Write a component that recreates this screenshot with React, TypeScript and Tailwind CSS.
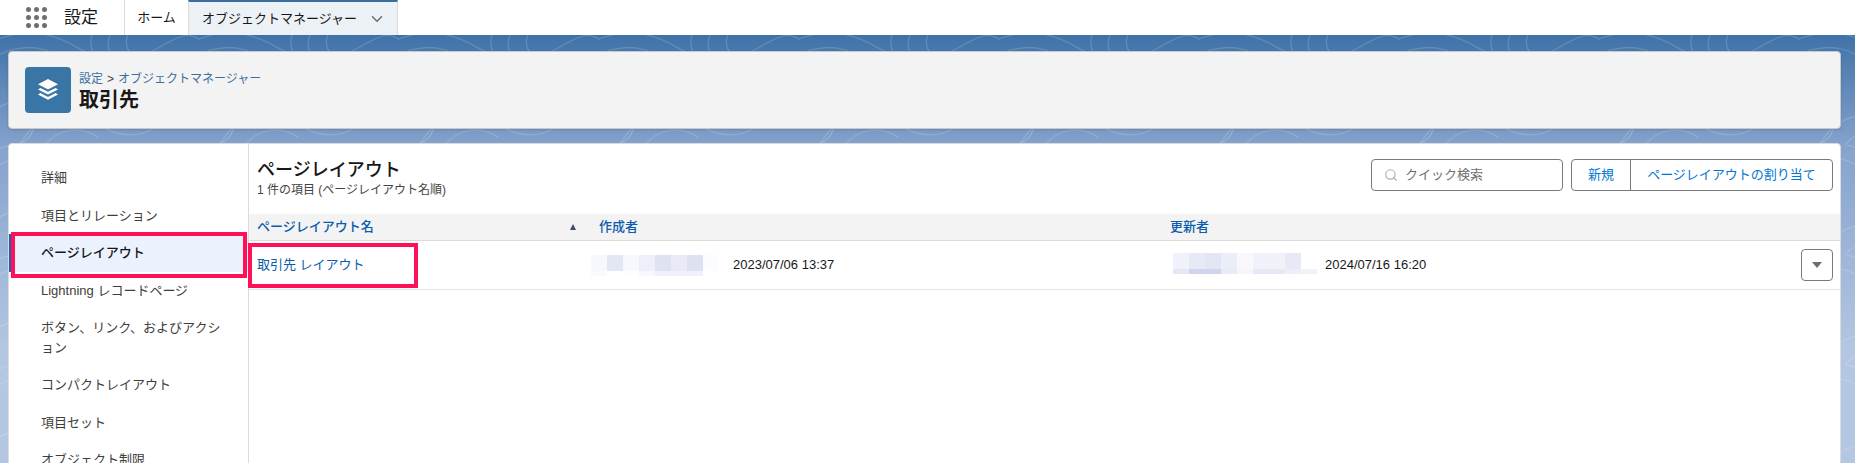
import React from "react";
import { ChevronDown, Search } from "lucide-react";

const sideItems = [
  "詳細",
  "項目とリレーション",
  "ページレイアウト",
  "Lightning レコードページ",
  "ボタン、リンク、およびアクション",
  "コンパクトレイアウト",
  "項目セット",
  "オブジェクト制限",
];

const creatorTop = ["#f7f8fd", "#e3e6f5", "#f7f8fc", "#eef0f9", "#dfe2f2", "#e8ebf7", "#dde1f2", "#fcfcfe"];
const creatorBottom = ["#f9f9fe", "#ffffff", "#fdfdff", "#f7f8fd", "#eef0fa", "#eef0fa", "#f0f2fb", "#ffffff"];
const updaterTop = ["#f0f1fa", "#e8e9f6", "#e3e5f4", "#ebedf8", "#f9f9fd", "#f0f1f9", "#f0f1f9", "#e8e9f6", "#ffffff"];
const updaterBottom = ["#e5e7f5", "#cfd5ef", "#cfd5ef", "#e8eaf6", "#f5f5fb", "#e6e8f5", "#e6e8f5", "#eceef8", "#f0f1f9"];

// pixelated patch that hides a user name
function Blur({ top, bottom, topH, bottomH }: { top: string[]; bottom: string[]; topH: string; bottomH: string }) {
  return (
    <div className="flex flex-col">
      <div className={`flex ${topH}`}>
        {top.map((c, i) => (
          <div key={i} className="w-[16px]" style={{ backgroundColor: c }} />
        ))}
      </div>
      <div className={`flex ${bottomH}`}>
        {bottom.map((c, i) => (
          <div key={i} className="w-[16px]" style={{ backgroundColor: c }} />
        ))}
      </div>
    </div>
  );
}

function TopoLines() {
  return (
    <svg className="absolute inset-0 w-full h-full" fill="none" stroke="#ffffff" strokeOpacity="0.16" strokeWidth="1.2">
      <defs>
        <pattern id="topo" width="200" height="110" patternUnits="userSpaceOnUse">
          <path d="M-10 8C30 -12 60 2 80 14S130 30 160 12 190 0 210 10" />
          <path d="M-10 24C30 2 55 16 75 32S130 50 165 30 190 16 210 26" />
          <path d="M20 110C35 80 70 72 95 88S150 106 165 80" />
          <path d="M45 110C58 94 80 90 98 102" />
          <path d="M0 72C15 62 30 68 33 86S20 110 10 110" />
          <path d="M110 0C105 12 110 20 120 28M128 0C124 10 128 16 134 22M92 0C88 12 94 22 104 30" />
          <path d="M175 44C190 50 196 66 188 80M160 50C176 56 182 68 176 84" />
        </pattern>
      </defs>
      <rect width="100%" height="100%" fill="url(#topo)" stroke="none" />
    </svg>
  );
}

export default function App() {
  return (
    <div
      className="w-[1855px] h-[463px] overflow-hidden flex flex-col text-[13px] text-[#181818]"
      style={{ fontFamily: '"Liberation Sans", "Noto Sans CJK JP", sans-serif' }}
    >
      {/* top nav */}
      <div className="h-[35px] shrink-0 bg-white flex items-center">
        <div className="ml-[26px] w-[21px] grid grid-cols-3 gap-x-[3px] gap-y-[3px]">
          {Array.from({ length: 9 }).map((_, i) => (
            <div key={i} className="w-[5px] h-[5px] rounded-full bg-[#706e6b]" />
          ))}
        </div>
        <div className="ml-[17px] w-[60px] text-[17px] leading-none">設定</div>
        <div className="h-full w-[64px] border-l border-[#dddbda] flex items-center justify-center">ホーム</div>
        <div className="h-full w-[210px] bg-[#ecf1f6] border-t-[2px] border-t-[#3a6f9f] border-x border-x-[#dddbda] flex items-center pl-[13px]">
          <span>オブジェクトマネージャー</span>
          <ChevronDown className="w-[18px] h-[18px] ml-[11px] text-[#706e6b]" />
        </div>
      </div>

      {/* page body */}
      <div className="relative flex-1 bg-gradient-to-b from-[#3f72a8] via-[#85a3cd] via-25% to-[#b3c6e2] to-70% pt-[16px] pl-[8px] pr-[14px]">
        <TopoLines />

        <div className="relative h-[78px] bg-[#f3f3f3] rounded-[4px] border border-[#c9c9c9] shadow-sm flex items-center pl-[16px]">
          <div className="w-[46px] h-[46px] rounded-[4px] bg-[#3a76a5] flex items-center justify-center">
            <svg width="22" height="24" viewBox="0 0 22 24" fill="#ffffff">
              <path d="M11 1l10 5.2L11 11.4 1 6.2z" />
              <path d="M3.4 9.9L11 13.8l7.6-3.9L21 11.4l-10 5.2-10-5.2z" />
              <path d="M3.4 15.1L11 19l7.6-3.9L21 16.6l-10 5.2-10-5.2z" />
            </svg>
          </div>
          <div className="ml-[8px] pt-[3px] flex flex-col">
            <div className="text-[12px] leading-[16px] text-[#3a6f9f]">
              設定<span className="text-[#444444] mx-[4px]">&gt;</span>オブジェクトマネージャー
            </div>
            <div className="text-[20px] leading-[26px] font-bold">取引先</div>
          </div>
        </div>

        <div className="relative mt-[14px] h-[340px] bg-white rounded-t-[4px] border border-[#dddbda] flex">
          {/* sidebar */}
          <div className="w-[240px] shrink-0 border-r border-[#dddbda] pt-[15px]">
            {sideItems.map((item, i) => (
              <div
                key={item}
                className={
                  i === 2
                    ? "pl-[30px] pr-[20px] py-[9px] leading-[19.5px] bg-[#ebf2fd] border-l-[2px] border-[#1b5fb0] font-medium"
                    : "pl-[32px] pr-[20px] py-[9px] leading-[19.5px] text-[#3e3e3c]"
                }
              >
                {item}
              </div>
            ))}
          </div>

          {/* list */}
          <div className="flex-1 flex flex-col">
            <div className="h-[70px] shrink-0 flex items-start justify-between pl-[8px] pr-[7px]">
              <div className="pt-[14px]">
                <div className="text-[18px] leading-[24px] font-medium">ページレイアウト</div>
                <div className="text-[12px] leading-[16px] text-[#444444]">1 件の項目 (ページレイアウト名順)</div>
              </div>
              <div className="flex items-center gap-[8px] mt-[15px]">
                <div className="w-[192px] h-[32px] border border-[#7a7a7a] rounded-[4px] flex items-center pl-[12px] text-[#706e6b]">
                  <Search className="w-[14px] h-[14px] text-[#aeaeae]" />
                  <span className="ml-[7px]">クイック検索</span>
                </div>
                <div className="h-[32px] border border-[#7a7a7a] rounded-[4px] flex items-center text-[#0176d3]">
                  <div className="w-[59px] h-full flex items-center justify-center border-r border-[#7a7a7a]">新規</div>
                  <div className="w-[201px] h-full flex items-center justify-center">ページレイアウトの割り当て</div>
                </div>
              </div>
            </div>

            <div className="h-[27px] shrink-0 bg-[#f3f3f3] border-b border-[#dddbda] grid grid-cols-[342px_571px_1fr] items-center pl-[8px] font-medium text-[#0b5cab]">
              <div className="flex items-center justify-between pr-[23px]">
                <span>ページレイアウト名</span>
                <span className="w-0 h-0 border-x-[3.5px] border-x-transparent border-b-[6px] border-b-[#3e4e66]" />
              </div>
              <div>作成者</div>
              <div>更新者</div>
            </div>

            <div className="h-[49px] shrink-0 border-b border-[#e5e5e5] grid grid-cols-[334px_582px_1fr] items-center pl-[8px] pr-[7px]">
              <div className="text-[#0b5cab]">取引先 レイアウト</div>
              <div className="flex items-center">
                <Blur top={creatorTop} bottom={creatorBottom} topH="h-[16px]" bottomH="h-[5px]" />
                <span className="ml-[14px]">2023/07/06 13:37</span>
              </div>
              <div className="flex items-center justify-between">
                <div className="flex items-center">
                  <div className="-mt-[4px]">
                    <Blur top={updaterTop} bottom={updaterBottom} topH="h-[16px]" bottomH="h-[5px]" />
                  </div>
                  <span className="ml-[8px]">2024/07/16 16:20</span>
                </div>
                <div className="w-[32px] h-[32px] border border-[#7a7a7a] rounded-[4px] flex items-center justify-center">
                  <span className="w-0 h-0 border-x-[5px] border-x-transparent border-t-[6px] border-t-[#706e6b]" />
                </div>
              </div>
            </div>
          </div>

          {/* annotation frames */}
          <div className="absolute left-[2px] top-[88px] w-[236px] h-[46px] border-[4px] border-[#ff1158]" />
          <div className="absolute left-[239px] top-[99px] w-[170px] h-[45px] border-[4px] border-[#ff1158]" />
        </div>
      </div>
    </div>
  );
}
